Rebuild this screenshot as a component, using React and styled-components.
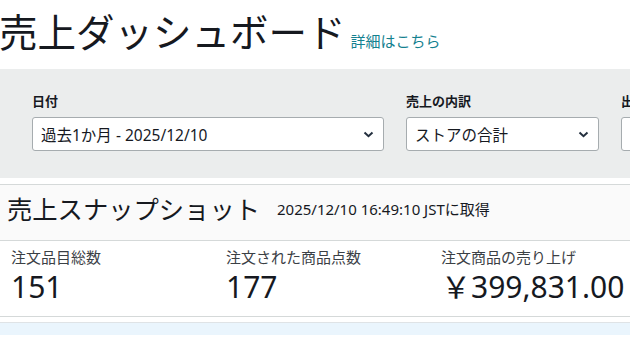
import React from "react";
import styled, { createGlobalStyle } from "styled-components";

const GlobalStyle = createGlobalStyle`
  html, body {
    margin: 0;
    padding: 0;
    background: #fff;
    font-family: "Noto Sans", "Noto Sans CJK JP", sans-serif;
    color: #16191f;
    overflow: hidden;
  }
`;

const Page = styled.div`
  width: 630px;
  height: 354px;
  overflow: hidden;
`;

const Header = styled.div`
  display: flex;
  align-items: baseline;
  gap: 5px;
  padding: 7px 0 0 0;
  height: 69px;
  box-sizing: border-box;
  white-space: nowrap;
`;

const Title = styled.h1`
  margin: 0 0 0 -1px;
  font-family: "Noto Sans CJK JP", sans-serif;
  font-weight: 400;
  font-size: 38.5px;
  line-height: 46px;
  color: #16191f;
`;

const MoreLink = styled.a`
  font-family: "Noto Sans CJK JP", sans-serif;
  font-size: 15px;
  color: #14818f;
  text-decoration: none;
`;

const FilterPanel = styled.div`
  background: #ebeded;
  display: flex;
  gap: 22px;
  padding: 23px 0 26px 32px;
  height: 109px;
  box-sizing: border-box;
`;

const Field = styled.div`
  display: flex;
  flex-direction: column;
  gap: 7px;
  width: ${(p) => p.$w}px;
  flex-shrink: 0;
`;

const Label = styled.label`
  font-family: "Noto Sans CJK JP", sans-serif;
  font-weight: 700;
  font-size: 13px;
  line-height: 18px;
  color: #16191f;
  white-space: nowrap;
`;

const Select = styled.div`
  height: 34px;
  box-sizing: border-box;
  background: #fff;
  border: 1px solid #a6acaf;
  border-radius: 3px;
  display: flex;
  align-items: center;
  justify-content: space-between;
  padding: 0 9px 0 8px;
  font-size: 15.5px;
  color: #16191f;
  white-space: nowrap;
`;

const Chevron = () => (
  <svg width="11" height="7" viewBox="0 0 11 7">
    <path d="M1.5 1.5 L5.5 5.2 L9.5 1.5" fill="none" stroke="#232f3e" strokeWidth="2" />
  </svg>
);

const Snapshot = styled.section`
  margin-top: 6px;
  border-top: 1px solid #d5d9d9;
`;

const SnapshotHead = styled.div`
  background: #fafafa;
  display: flex;
  align-items: center;
  gap: 17px;
  height: 56px;
  box-sizing: border-box;
  padding: 0 0 9px 7px;
  border-bottom: 1px solid #d5d9d9;
  white-space: nowrap;
`;

const SnapshotTitle = styled.h2`
  margin: 0;
  font-family: "Noto Sans CJK JP", sans-serif;
  font-weight: 400;
  font-size: 25.3px;
  line-height: 32px;
  color: #16191f;
`;

const Stamp = styled.span`
  font-size: 15px;
  color: #16191f;
`;

const Metrics = styled.div`
  display: grid;
  grid-template-columns: 215px 215px 1fr;
  padding: 5px 0 0 11px;
  height: 76px;
  box-sizing: border-box;
  border-bottom: 1px solid #d5d9d9;
`;

const Metric = styled.div`
  display: flex;
  flex-direction: column;
`;

const MetricLabel = styled.div`
  font-family: "Noto Sans CJK JP", sans-serif;
  font-size: 15px;
  line-height: 22px;
  color: #3b4045;
  white-space: nowrap;
`;

const MetricValue = styled.div`
  font-size: 30px;
  line-height: 38px;
  color: #16191f;
  white-space: nowrap;
`;

const BlueStrip = styled.div`
  margin-top: 5px;
  border-top: 1px solid #dfe3e6;
  background: #eaf5fd;
  height: 12px;
`;

export default function App() {
  return (
    <Page>
      <GlobalStyle />
      <Header>
        <Title>売上ダッシュボード</Title>
        <MoreLink href="#">詳細はこちら</MoreLink>
      </Header>
      <FilterPanel>
        <Field $w={352}>
          <Label>日付</Label>
          <Select>
            <span>過去1か月 - 2025/12/10</span>
            <Chevron />
          </Select>
        </Field>
        <Field $w={193}>
          <Label>売上の内訳</Label>
          <Select>
            <span>ストアの合計</span>
            <Chevron />
          </Select>
        </Field>
        <Field $w={200}>
          <Label>出品者</Label>
          <Select>
            <span></span>
          </Select>
        </Field>
      </FilterPanel>
      <Snapshot>
        <SnapshotHead>
          <SnapshotTitle>売上スナップショット</SnapshotTitle>
          <Stamp>2025/12/10 16:49:10 JSTに取得</Stamp>
        </SnapshotHead>
        <Metrics>
          <Metric>
            <MetricLabel>注文品目総数</MetricLabel>
            <MetricValue>151</MetricValue>
          </Metric>
          <Metric>
            <MetricLabel>注文された商品点数</MetricLabel>
            <MetricValue>177</MetricValue>
          </Metric>
          <Metric>
            <MetricLabel>注文商品の売り上げ</MetricLabel>
            <MetricValue>￥399,831.00</MetricValue>
          </Metric>
        </Metrics>
        <BlueStrip />
      </Snapshot>
    </Page>
  );
}
